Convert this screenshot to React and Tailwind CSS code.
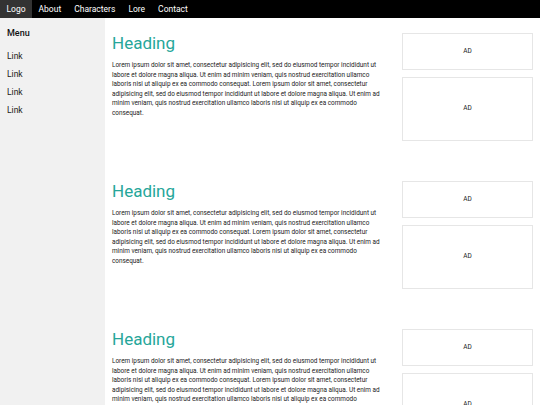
import React from "react";

const LOREM =
  "Lorem ipsum dolor sit amet, consectetur adipisicing elit, sed do eiusmod tempor incididunt ut labore et dolore magna aliqua. Ut enim ad minim veniam, quis nostrud exercitation ullamco laboris nisi ut aliquip ex ea commodo consequat. Lorem ipsum dolor sit amet, consectetur adipisicing elit, sed do eiusmod tempor incididunt ut labore et dolore magna aliqua. Ut enim ad minim veniam, quis nostrud exercitation ullamco laboris nisi ut aliquip ex ea commodo consequat.";

function Section() {
  return (
    <div className="flex pt-[15px] h-[148px] shrink-0">
      <div className="w-[290px] px-[7px]">
        <h2 className="text-[17px] leading-[20px] text-[#26a69a]">Heading</h2>
        <p className="text-[6.4px] leading-[9.6px] text-[#222] mt-[8px]">{LOREM}</p>
      </div>
      <div className="w-[145px] px-[7px] flex flex-col gap-[7px]">
        <div className="h-[37px] border border-[#e6e6e6] flex items-center justify-center text-[6.5px] text-[#222]">AD</div>
        <div className="h-[64px] border border-[#e6e6e6] flex items-center justify-center text-[6.5px] text-[#222]">AD</div>
      </div>
    </div>
  );
}

export default function App() {
  return (
    <div className="w-[540px] h-[405px] overflow-hidden bg-white flex flex-col" style={{ fontFamily: "Roboto, 'Liberation Sans', sans-serif" }}>
      <nav className="h-[18px] bg-black flex text-white text-[8.5px] leading-[18px] shrink-0">
        <div className="bg-[#333] px-[6.5px]">Logo</div>
        <div className="px-[6.5px]">About</div>
        <div className="px-[6.5px]">Characters</div>
        <div className="px-[6.5px]">Lore</div>
        <div className="px-[6.5px]">Contact</div>
      </nav>
      <div className="flex flex-1 min-h-0">
        <aside className="w-[105px] bg-[#f1f1f1] shrink-0 px-[7px]">
          <div className="text-[9px] font-medium text-[#111] mt-[10px] leading-[11px]">Menu</div>
          <div className="mt-[12px] flex flex-col gap-[7px] text-[8.5px] leading-[11px] text-[#222]">
            <div>Link</div>
            <div>Link</div>
            <div>Link</div>
            <div>Link</div>
          </div>
        </aside>
        <main className="flex-1 flex flex-col">
          <Section />
          <Section />
          <Section />
        </main>
      </div>
    </div>
  );
}
